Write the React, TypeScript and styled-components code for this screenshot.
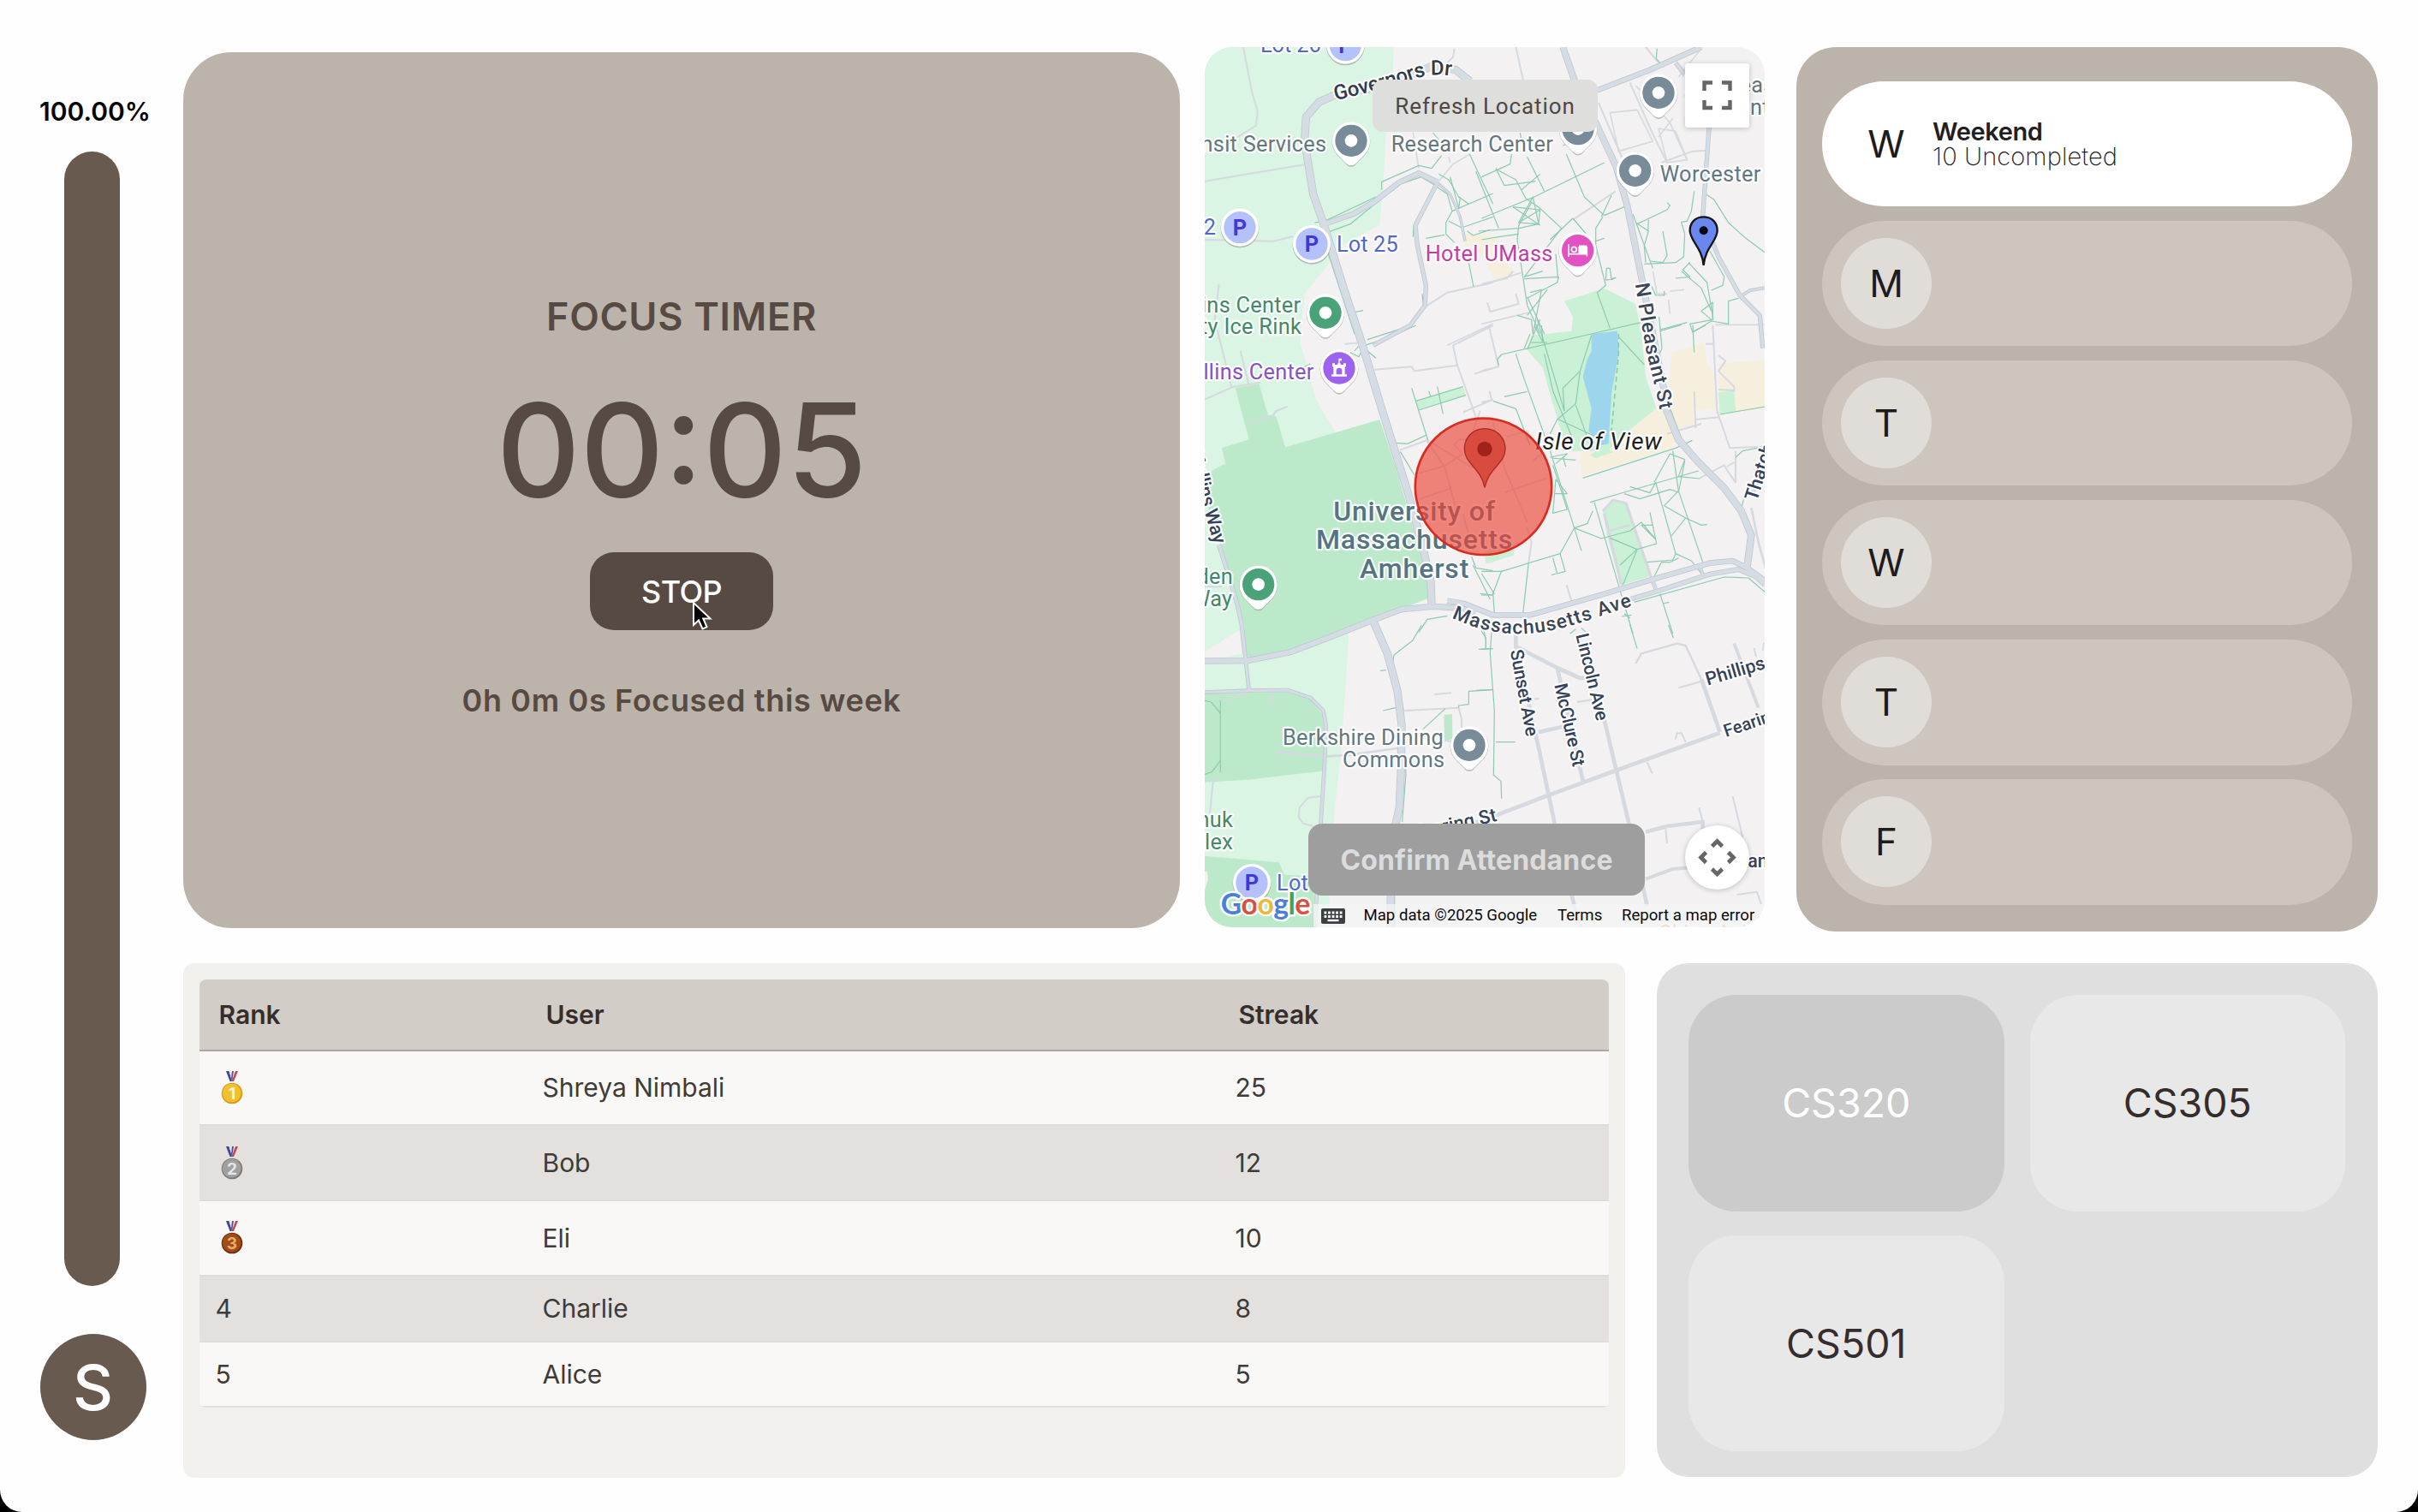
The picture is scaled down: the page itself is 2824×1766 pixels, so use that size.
import React from "react";
import styled, { createGlobalStyle } from "styled-components";

const GlobalStyle = createGlobalStyle`
  html, body { margin: 0; padding: 0; background: #000; }
  * { box-sizing: border-box; }
  body { font-family: Inter, "Liberation Sans", sans-serif; }
`;

/* ---------- page frame ---------- */

const Page = styled.div`
  display: flex;
  width: 2824px;
  height: 1766px;
  overflow: hidden;
  background: #fefefe;
  border-radius: 0 0 26px 26px;
`;

const Sidebar = styled.aside`
  display: flex;
  flex-direction: column;
  align-items: center;
  width: 214px;
  padding: 115px 0 0 2px;
`;

const Percent = styled.div`
  height: 30px;
  margin: 0 0 32px 6px;
  font-size: 30px;
  line-height: 30px;
  font-weight: 600;
  color: #060606;
`;

const ProgressBar = styled.div`
  width: 65px;
  height: 1325px;
  margin-right: 1px;
  border-radius: 33px;
  background: #685a4e;
`;

const Avatar = styled.div`
  display: flex;
  align-items: center;
  justify-content: center;
  width: 124px;
  height: 124px;
  margin: 56px 0 0 1px;
  border-radius: 50%;
  background: #685a4e;
  color: #fff;
  font-size: 73px;
  font-weight: 500;
  line-height: 1;
`;

const Main = styled.main`
  display: flex;
  flex-direction: column;
  gap: 37px;
  width: 2563px;
  padding-top: 55px;
`;

const Row = styled.div`
  display: flex;
  align-items: flex-start;
`;

/* ---------- focus timer ---------- */

const TimerCard = styled.section`
  display: flex;
  flex-direction: column;
  align-items: center;
  width: 1164px;
  height: 1023px;
  margin: 6px 28.5px 0 0;
  padding-top: 285.5px;
  border-radius: 56px;
  background: #bcb4ab;
  color: #564a43;
`;

const TimerTitle = styled.h2`
  margin: 0 0 58px;
  font-size: 45px;
  line-height: 45px;
  font-weight: 600;
  letter-spacing: 0.7px;
`;

const Clock = styled.div`
  margin-bottom: 43.5px;
  font-size: 152px;
  line-height: 152px;
  font-weight: 500;
  letter-spacing: -0.4px;
  font-feature-settings: "calt" 1, "case" 1;
`;

const StopButton = styled.button`
  width: 214px;
  height: 91px;
  margin-bottom: 64px;
  border: 0;
  border-radius: 28px;
  background: #564a43;
  color: #fff;
  font: 500 36px/1 Inter, sans-serif;
  letter-spacing: -0.6px;
  position: relative;
`;

const Cursor = styled.svg`
  position: absolute;
  left: 117px;
  top: 54px;
  overflow: visible;
`;

const WeekTotal = styled.div`
  font-size: 36px;
  line-height: 36px;
  font-weight: 600;
  letter-spacing: 0.65px;
`;

/* ---------- map ---------- */

const MapCard = styled.section`
  position: relative;
  width: 654.5px;
  height: 1028px;
  margin-right: 37px;
  border-radius: 32px;
  overflow: hidden;
  background: #f3f1f2;
  font-family: Roboto, sans-serif;
`;

const MapCanvas = styled.svg`
  display: block;
  width: 100%;
  height: 100%;
`;

const Area = styled.path<{ $c: string }>`
  fill: ${(p) => p.$c};
`;

const Line = styled.path<{ $c: string; $w: number }>`
  fill: none;
  stroke: ${(p) => p.$c};
  stroke-width: ${(p) => p.$w};
  stroke-linejoin: round;
`;

const Label = styled.text<{ $c: string; $s?: number; $b?: boolean; $i?: boolean }>`
  font-family: Roboto, sans-serif;
  font-size: ${(p) => p.$s ?? 76}px;
  font-weight: ${(p) => (p.$b ? 500 : 400)};
  font-style: ${(p) => (p.$i ? "italic" : "normal")};
  letter-spacing: ${(p) => (p.$b || p.$i ? 0 : 0.8)}px;
  fill: ${(p) => p.$c};
  stroke: #fff;
  stroke-opacity: 0.9;
  stroke-width: 13px;
  stroke-linejoin: round;
  paint-order: stroke;
`;

const RefreshButton = styled.button`
  position: absolute;
  left: 196.5px;
  top: 38px;
  width: 263px;
  height: 61px;
  border: 0;
  border-radius: 12px;
  background: #dededd;
  color: #4f4743;
  font: 400 26px/1 Roboto, sans-serif;
  letter-spacing: 0.9px;
`;

const ConfirmButton = styled.button`
  position: absolute;
  left: 121.5px;
  top: 907px;
  width: 393px;
  height: 84px;
  padding: 2px 0 0;
  border: 0;
  border-radius: 16px;
  background: #9e9e9e;
  color: #dcdcdc;
  font: 700 32px/1 Inter, sans-serif;
  letter-spacing: 0.15px;
`;

const MapControl = styled.button<{ $top: number; $round?: boolean }>`
  position: absolute;
  left: 561px;
  top: ${(p) => p.$top}px;
  width: 75px;
  height: 75px;
  padding: 0;
  border: 0;
  border-radius: ${(p) => (p.$round ? "50%" : "3px")};
  background: #fff;
  box-shadow: 0 1px 6px rgba(0, 0, 0, 0.22);
  svg { display: block; }
`;

const Attribution = styled.div`
  position: absolute;
  right: 0;
  bottom: 0;
  display: flex;
  align-items: center;
  width: 527px;
  height: 27px;
  padding-left: 9px;
  background: rgba(245, 245, 245, 0.78);
  color: #0a0a0a;
  font-size: 18.6px;
  line-height: 27px;
  white-space: nowrap;
`;

const Credit = styled.span<{ $w: number }>`
  width: ${(p) => p.$w}px;
`;

const Keyboard = styled.svg`
  width: 28px;
  height: 18px;
  margin-right: 21.5px;
`;

/* ---------- week ---------- */

const WeekCard = styled.section`
  display: flex;
  flex-direction: column;
  gap: 16.5px;
  width: 678.5px;
  height: 1032.5px;
  padding: 39.6px 29.5px 0;
  border-radius: 46px;
  background: #bcb4ab;
`;

const Day = styled.div<{ $active?: boolean }>`
  display: flex;
  align-items: center;
  height: 146.6px;
  padding-left: 22.5px;
  border-radius: 74px;
  background: ${(p) => (p.$active ? "#ffffff" : "#cec5bf")};
`;

const DayLetter = styled.div<{ $active?: boolean }>`
  display: flex;
  align-items: center;
  justify-content: center;
  width: 106px;
  height: 106px;
  border-radius: 50%;
  background: ${(p) => (p.$active ? "#ffffff" : "#e0ddd9")};
  color: #1d1b1b;
  font-size: 44px;
  line-height: 1;
`;

const DayText = styled.div`
  margin-left: 1px;
  color: #202022;
  font-size: 29px;
  line-height: 29px;
`;

const DayName = styled.div`
  font-weight: 600;
  letter-spacing: -0.4px;
`;

const DayCount = styled.div`
  font-weight: 200;
  letter-spacing: 0.1px;
`;

/* ---------- leaderboard ---------- */

const Board = styled.section`
  width: 1683.5px;
  height: 601.5px;
  margin-right: 37.5px;
  padding: 19px;
  border-radius: 13px;
  background: #f1f0ec;
`;

const Table = styled.table`
  width: 100%;
  table-layout: fixed;
  border-collapse: separate;
  border-spacing: 0;
  border-radius: 8px;
  overflow: hidden;
  color: #3f3b39;
  font-size: 30px;
  line-height: 36px;
`;

const HeadCell = styled.th<{ $w?: number }>`
  width: ${(p) => (p.$w ? `${p.$w}px` : "auto")};
  height: 84px;
  padding: 0 0 0 22.5px;
  border-bottom: 2px solid #aea6a0;
  background: #d3cdc8;
  color: #352e2c;
  text-align: left;
  font-weight: 600;
`;

const BodyRow = styled.tr<{ $alt: boolean; $h: number }>`
  height: ${(p) => p.$h}px;
  background: ${(p) => (p.$alt ? "#e4e0dd" : "#f9f8f6")};
`;

const Cell = styled.td`
  padding: 0 0 0 18.5px;
  border-bottom: 2px solid #dfdcd9;
`;

const MedalIcon = styled.svg`
  display: block;
  width: 26px;
  height: 39px;
  margin: 0 0 0 6px;
`;

/* ---------- classes ---------- */

const Classes = styled.section`
  display: grid;
  grid-template-columns: 368.5px 368.5px;
  grid-template-rows: 252.5px 252.5px;
  gap: 28px 30px;
  width: 841.5px;
  height: 600px;
  padding: 37.5px 37px;
  border-radius: 37px;
  background: #dfdfdf;
`;

const ClassTile = styled.div<{ $active?: boolean }>`
  display: flex;
  align-items: center;
  justify-content: center;
  border-radius: 56px;
  background: ${(p) => (p.$active ? "#cbcbcb" : "#e8e8e8")};
  color: ${(p) => (p.$active ? "#ffffff" : "#352d2d")};
  font-size: 46.5px;
  line-height: 1;
`;

/* ---------- map data: drawn in thirds of a pixel ---------- */

type Pts = string;
const d = (pts: Pts) => "M" + pts.split(" ").join("L");

const C = {
  light: "#daf5e3", mid: "#bde9cb", park: "#caf0d5", beige: "#f6efdd", water: "#9dd6ec",
  road: "#d5dce4", edge: "#bfc8d2", path: "#8ccbb0", minor: "#d6d9df",
};

interface Tile {
  x: number; y: number;
  areas?: [string, Pts][];
  roads?: [number, Pts][];
  minor?: [number, Pts][];
  paths?: Pts[];
}

const tiles: Tile[] = [
  {
    x: 0, y: 0,
    areas: [[C.light, "40,40 712,45 705,250 685,350 674,560 662,668 620,690 500,760 480,810 400,910 390,1000 385,1080 405,1150 440,1280 505,1390 500,1500 40,1620"]],
    roads: [
      [28, "980,165 930,125 850,110 700,175 500,215 450,238 405,290 400,370 412,450 430,560 465,660 540,900 590,1050 615,1130 660,1280 710,1440 760,1600 815,1800 842,1920 845,2000"],
      [20, "470,665 570,630 640,590 730,520 800,487 865,518"],
      [16, "865,520 788,670 795,740 825,880 822,950 770,1020 640,1090"],
      [10, "865,520 910,560 945,640 962,725"],
    ],
    minor: [[6, "185,45 215,200 235,270 230,320 165,360"], [6, "50,515 200,490 400,457"], [6, "50,720 290,725 360,708"], [6, "100,875 85,1000 100,1060 145,1240"], [6, "830,950 900,905 1060,870"], [5, "870,515 920,455 980,420"], [5, "780,345 800,470"], [6, "925,50 920,80 890,110"], [5, "1060,1015 900,1090"], [5, "905,430 910,450"]],
    paths: ["670,545 670,517 800,460 845,470 880,425", "730,527 808,500 850,525 900,560 917,620 895,660 895,700 925,730", "480,694 560,665 640,600 730,530", "870,490 905,510 940,570 975,595", "978,420 1060,595", "945,570 940,610 910,500", "917,620 1060,558", "905,655 950,678 1060,640", "825,715 890,703", "970,690 990,705 1050,685", "780,710 782,670 858,528", "975,800 992,885", "500,780 598,1050", "480,760 575,1050", "812,910 817,960 760,1025 620,1070", "570,975 605,968", "435,660 470,655 650,570", "400,360 412,450 450,620", "850,345 870,370"],
  },
  {
    x: 1020, y: 0,
    areas: [[C.beige, "-50,715 50,708 70,790 110,825 100,850 50,865 10,790"], [C.beige, "-60,700 20,700 20,760 -60,740"]],
    roads: [
      [24, "285,45 325,160 400,310 470,460 510,600 550,800 570,900 600,1050 650,1300"],
      [20, "370,210 590,125 770,45"],
      [16, "680,100 715,145 785,240 797,330 782,540 775,640 830,780 905,915 975,985 985,1100"],
      [12, "903,920 940,898 995,888"],
    ],
    minor: [[6, "120,45 148,170"], [6, "575,45 625,105"], [6, "410,240 500,450"], [6, "520,170 600,350 650,450"], [5, "450,275 545,265 600,375 480,410 450,275"], [5, "540,180 660,310 720,440"], [5, "620,330 680,340 720,440 650,450 620,330"], [5, "620,360 670,295"], [6, "630,450 740,410 785,408"], [6, "320,650 470,550"], [6, "0,880 140,835"], [6, "120,910 130,945 30,972 20,940"], [5, "0,1015 165,975"], [5, "600,830 615,910 650,910"], [5, "655,930 660,980"], [5, "660,900 710,895"], [5, "820,1018 990,1018"], [5, "770,50 690,150"], [6, "0,875 90,855 110,830"]],
    paths: ["0,500 100,455 105,420", "0,645 180,572 430,450", "-20,480 60,680", "50,470 80,530 190,515", "55,475 120,510 155,575 205,610 200,665 130,660", "110,605 205,670", "110,605 205,615 130,660 180,570 200,665", "140,545 205,490", "160,430 220,550", "135,345 140,370", "285,390 320,375", "297,420 360,570 430,635 500,605", "420,640 455,565", "-10,690 130,680 200,665", "0,720 60,710 130,700", "175,590 130,670 125,720 145,850 160,950 205,1050", "425,640 400,680 400,740 435,880 405,905 450,1030", "150,857 270,850 265,870 160,925", "205,610 280,680 150,850 215,830", "240,720 320,645 400,740", "260,770 268,860", "400,725 430,715", "530,630 600,820", "540,660 585,690 570,740", "545,665 650,615 660,600 650,590", "585,650 583,690", "635,690 650,775 635,800 590,795", "570,740 575,800", "745,550 735,620 720,655 700,658 712,700 708,780 680,800 570,805", "785,560 815,580 865,660 920,710 993,765", "725,800 790,870 812,1000", "700,830 770,890 805,970", "680,855 730,850 705,825 730,800", "800,760 850,850 845,880 805,897", "805,1000 770,970 810,940 810,1000 730,1015 740,1045 805,1005 865,1015 865,935 900,925", "625,1040 700,1018", "435,860 438,820 450,820 455,860 470,853 435,862", "590,870 610,915 640,915 640,900", "160,920 220,1050", "170,905 210,895 180,1050", "125,985 175,1000 180,1050", "615,50 612,85 625,100", "450,440 460,460", "230,895 160,985"],
  },
  {
    x: 0, y: 1020,
    areas: [
      [C.light, "40,480 130,480 200,1050 40,1150"],
      [C.mid, "157,220 240,205 272,315 300,318 333,430 125,492 110,430 205,400 190,345"],
      [C.mid, "50,525 110,490 330,428 663,330 720,500 790,740 835,890 838,955 760,985 600,1050 350,1135 200,1170 190,1050 150,920 110,790 50,600"],
      [C.park, "790,265 955,215 965,245 800,295"],
      [C.park, "1030,790 1140,775 1130,800 1035,835"],
    ],
    roads: [[16, "100,770 135,880 165,980 180,1050 190,1150"]],
    minor: [[6, "175,90 205,210"], [6, "50,260 150,215 245,200"], [7, "200,345 290,315 300,300 340,285"], [6, "645,155 775,145 785,160 935,140 920,70 1060,0"], [6, "935,140 1000,320"], [6, "735,437 830,402 990,500"], [6, "540,65 600,60"], [6, "995,170 1060,150"], [6, "955,305 1060,260"], [5, "1015,300 990,370 975,400 940,400 925,420 950,445"], [6, "825,400 890,495 930,640"], [6, "800,518 890,493 955,450"], [6, "800,610 910,572"], [6, "50,915 110,915"], [6, "1060,340 1100,500 1180,690"], [6, "1100,585 1250,535"], [6, "955,660 990,790"], [5, "1110,390 1180,370 1230,450 1200,475"]],
    paths: ["775,220 832,402", "790,265 955,215", "965,245 800,297", "865,215 885,310", "835,230 842,252", "720,412 760,415 825,385", "735,442 785,525", "575,90 587,75 610,70 690,45 790,0", "560,95 590,110 600,90", "620,90 650,115", "800,1075 830,1030 900,1018", "985,810 1000,850 1060,860", "1015,940 1060,945", "400,145 420,135", "1020,1075 1030,1050", "990,840 1050,960"],
  },
  {
    x: 1020, y: 1020,
    areas: [
      [C.beige, "600,290 640,300 690,390 665,430 350,530 345,450 440,430 520,360"],
      [C.beige, "665,95 780,60 790,130 820,180 820,300 745,290 740,350 690,360 650,290 660,180"],
      [C.beige, "830,135 993,120 993,290 830,310"],
      [C.park, "830,235 885,228 890,300 835,312"],
      [C.park, "160,85 175,35 315,20 320,-30 290,-85 430,-130 540,-75 560,30 575,180 612,290 520,365 440,440 300,440 245,260 215,150"],
      [C.water, "385,30 475,20 482,90 455,240 445,415 420,420 375,370 385,290 355,180 370,120 385,90"],
      [C.park, "380,455 400,440 430,420 460,445 400,465"],
      [C.park, "425,650 460,610 500,618 590,880 490,910 440,740"],
      [C.park, "20,815 110,790 115,805 20,835"],
    ],
    minor: [[10, "430,660 490,910"], [10, "505,620 600,900"], [8, "425,650 460,612 505,622"], [8, "440,722 520,700"], [6, "810,0 825,300 870,430 990,425"], [6, "750,330 830,322"], [6, "745,230 750,360"], [6, "785,65 815,65"], [6, "830,105 855,125 830,160 885,215 885,228 830,225"], [6, "0,160 60,145 25,0"], [6, "0,270 35,262 28,230"], [6, "650,380 770,345"], [6, "890,440 890,550 865,515 850,490 765,535"], [6, "885,480 860,495"], [6, "298,910 315,965"], [6, "160,710 175,760 165,830"], [14, "945,600 993,500"], [8, "945,640 970,760 995,850"]],
    roads: [
      [26, "645,290 690,400 760,480 850,570 910,650 945,735 930,850"],
      [20, "-120,965 -60,975 40,1015 170,1015 400,950 600,890 800,833 880,825 930,850 993,895"],
      [18, "520,960 620,930 800,872 900,855 960,880 993,910"],
      [14, "598,890 610,925"], [12, "765,840 775,875"],
    ],
    paths: ["60,140 55,120 70,102 385,30 600,-20", "120,100 150,190 240,440 350,790", "80,250 160,232", "195,-20 290,300", "220,100 250,230 320,400", "40,265 120,292 170,420", "385,35 345,160 285,220 290,300", "345,160 330,275 265,330 240,380", "330,280 368,385", "270,330 400,390", "480,40 570,138", "355,535 680,430 738,403", "380,620 500,585 760,510", "395,620 480,910 530,1080", "605,550 660,450 712,470 690,530 765,537", "670,440 690,580 640,632 715,675 770,700 790,698", "690,580 775,830", "610,550 680,800 670,822 580,830", "712,475 690,585 660,575 555,608 500,590", "520,565 590,587 610,550", "715,675 665,738", "630,830 605,880", "680,800 735,825 770,870", "690,815 660,830 630,830", "245,465 330,472", "240,462 300,450 260,485", "285,460 295,495", "250,490 300,645 250,658 260,540 300,590 255,590", "325,710 420,747 520,720 560,690 610,750 560,700 600,700", "590,655 613,765 545,785 450,745", "325,710 275,800 70,862 0,862", "325,710 370,695 390,650", "250,815 265,870 293,862 275,800", "245,875 262,870", "165,830 145,1010", "70,860 40,940 45,1010", "0,870 45,942", "0,945 40,945", "545,785 485,840", "545,785 495,910", "625,940 670,1080", "535,970 850,882 935,885 993,935", "490,1020 525,1015", "500,1010 520,1025", "635,975 657,970", "622,-30 632,80 620,110", "740,0 745,95", "740,22 785,0", "625,15 720,-10", "835,312 993,285", "890,462 915,440 993,425", "660,290 690,370 720,440 790,520 912,635 918,610", "160,85 205,-20", "175,60 230,60", "185,0 215,60 210,0", "150,80 170,30"],
  },
  {
    x: 0, y: 2070,
    areas: [
      [C.light, "40,130 555,20 545,200 525,470 505,650 480,1070 40,1070"],
      [C.mid, "190,0 190,120 350,90 500,40 600,0"],
      [C.mid, "40,240 340,235 420,262 468,320 472,450 462,512 200,542 40,552"],
      [C.mid, "40,808 310,832 330,875 435,880 430,1070 40,1070"],
      ["#f3f1f2", "40,860 58,865 62,890 50,930 40,930"],
      [C.mid, "888,315 917,312 918,400 890,405"],
    ],
    roads: [
      [22, "40,126 200,125 350,95 500,38 640,-18 740,-55 850,-65 940,-60 1000,-45"],
      [14, "180,0 205,230"],
      [14, "40,236 200,230 340,228 420,255 465,300 475,350 472,450 457,690 435,1070"],
      [28, "640,-15 690,100 725,230 740,350 738,500 732,640 705,760 700,1070"],
    ],
    minor: [[8, "300,445 480,460 560,455 725,432"], [6, "125,265 210,235"], [6, "285,230 287,280"], [6, "460,600 412,605 382,640 380,675 395,695 430,705"], [6, "108,535 80,540 68,660"], [6, "750,300 940,290 950,330 950,360"], [6, "855,243 915,238"], [6, "890,405 920,408"]],
    paths: ["50,265 72,270 90,290 105,310", "105,265 105,515", "50,523 75,515 105,475", "810,0 778,55 713,105 705,160 745,290 750,450 755,520 742,690", "665,160 685,158", "675,300 720,290", "893,293 815,365", "940,290 940,282 975,278 975,232 1060,227", "1022,25 1035,45 1035,85", "1018,85 1060,83", "715,900 715,1070"],
  },
  {
    x: 1020, y: 2070,
    minor: [
      [14, "120,30 120,75 200,430 255,690 325,985"], [14, "120,75 265,150 345,186 365,185"], [14, "265,150 355,545"], [14, "420,290 515,690 580,985"],
      [14, "-220,765 55,665 225,600 470,510 835,378"], [14, "575,725 650,705 775,690 775,715"], [12, "575,890 670,855 730,850"],
      [7, "540,135 560,100 685,65 715,72 770,190"], [14, "770,190 835,375"], [6, "690,220 770,198"], [12, "885,65 970,290"], [6, "955,80 962,112"], [5, "985,90 988,65 993,65"],
      [14, "200,375 285,356"], [7, "335,270 385,262"], [6, "185,260 202,257"], [6, "680,400 684,380 700,378 715,410"], [6, "580,480 598,520"], [6, "645,715 650,765"], [6, "762,640 775,690"], [6, "880,600 915,745"], [6, "895,945 965,935 980,980"], [12, "325,985 350,1060"],
    ],
    paths: ["35,25 30,100 45,300 42,525 68,548 70,608", "-20,229 40,226", "50,410 118,410", "520,0 545,82", "655,0 672,45", "-10,85 30,83", "310,30 330,15", "350,10 370,30", "8,20 15,50 15,80"],
  },
];

const Basemap = () => (
  <g>
    {tiles.map((t, i) => (
      <g key={i} transform={`translate(${t.x} ${t.y})`}>
        {t.areas?.map(([c, p], j) => <Area key={j} $c={c} d={d(p) + "Z"} />)}
      </g>
    ))}
    {tiles.map((t, i) => (
      <g key={i} transform={`translate(${t.x} ${t.y})`}>
        {t.minor?.map(([w, p], j) => <Line key={j} $c={C.minor} $w={w} d={d(p)} />)}
        {t.paths?.map((p, j) => <Line key={j} $c={C.path} $w={3.6} d={d(p)} />)}
      </g>
    ))}
    {tiles.map((t, i) => (
      <g key={i} transform={`translate(${t.x} ${t.y})`}>
        {t.roads?.map(([w, p], j) => <Line key={j} $c={C.edge} $w={w} d={d(p)} />)}
      </g>
    ))}
    {tiles.map((t, i) => (
      <g key={i} transform={`translate(${t.x} ${t.y})`}>
        {t.roads?.map(([w, p], j) => <Line key={j} $c={C.road} $w={w - 5} d={d(p)} />)}
      </g>
    ))}
    <path d="M1500,1050L1500,1120L1475,1390" fill="none" stroke={C.path} strokeWidth="5" strokeDasharray="18 12" />
  </g>
);

const Pin = ({ x, y, c, children }: { x: number; y: number; c: string; children?: React.ReactNode }) => (
  <g transform={`translate(${x} ${y})`}>
    <path d="M0,92C-10,92 -16,86 -22,78C-34,62 -67,44 -67,2A67,67 0 1 1 67,2C67,44 34,62 22,78C16,86 10,92 0,92Z" fill="#8a9096" opacity="0.55" />
    <path d="M0,87C-10,87 -16,82 -22,75C-34,60 -66,42 -66,0A66,66 0 1 1 66,0C66,42 34,60 22,75C16,82 10,87 0,87Z" fill="#fff" />
    <circle r="56" fill={c} />
    {children ?? <circle r="22" fill="#fff" />}
  </g>
);

const Parking = ({ x, y }: { x: number; y: number }) => (
  <g transform={`translate(${x} ${y})`}>
    <circle cy="4" r="67" fill="#8a9096" opacity="0.55" />
    <circle r="66" fill="#fff" />
    <circle r="56" fill="#b5c1fa" />
    <text y="27" textAnchor="middle" fontFamily="Roboto, sans-serif" fontWeight="700" fontSize="76" fill="#4338d6">P</text>
  </g>
);

const slate = "#64767f";
const green = "#44886a";
const indigo = "#5367c6";
const navy = "#33415a";

const PathLabel = ({ id, path, len, size = 64, c = navy, children }: { id: string; path: string; len?: number; size?: number; c?: string; children: string }) => (
  <>
    <path id={id} d={path} fill="none" />
    <Label $c={c} $s={size} $b>
      <textPath href={`#${id}`} textLength={len}>{children}</textPath>
    </Label>
  </>
);

const CampusMap = () => (
  <MapCanvas viewBox="50 45 1963.5 3084" preserveAspectRatio="none">
    <Basemap />

    <PathLabel id="gov" size={72} c="#2f3a4a" len={418} path="M508,232C620,205 700,185 790,155C830,142 870,138 930,148">Governors Dr</PathLabel>
    <PathLabel id="pls" size={70} c="#3b4557" len={450} path="M1558,875L1585,1040L1597,1110L1629,1240L1650,1340">N Pleasant St</PathLabel>
    <PathLabel id="mass" size={68} c="#3a4454" len={655} path="M915,2045C1000,2083 1080,2105 1180,2100C1300,2093 1400,2048 1570,1996">Massachusetts Ave</PathLabel>
    <PathLabel id="mull" size={66} len={345} path="M-5,1455L45,1660L92,1820">Mullins Way</PathLabel>
    <PathLabel id="that" size={66} path="M1984,1638L2070,1370">Thatcher Rd</PathLabel>
    <PathLabel id="sun" len={308} path="M1120,2160L1180,2480">Sunset Ave</PathLabel>
    <PathLabel id="mcc" len={296} path="M1275,2280L1345,2590">McClure St</PathLabel>
    <PathLabel id="lin" len={312} path="M1350,2105L1428,2430">Lincoln Ave</PathLabel>
    <PathLabel id="phi" size={65} path="M1812,2282L2100,2198">Phillips St</PathLabel>
    <PathLabel id="fea" size={61} path="M1876,2463L2150,2370">Fearing St</PathLabel>
    <PathLabel id="fea2" size={66} path="M784,2822L1084,2754">Fearing St</PathLabel>

    <Label $c={indigo} x="245" y="62" textLength="213">Lot 26</Label>
    <Label $c={slate} x="477" y="410" textAnchor="end">Transit Services</Label>
    <Label $c={slate} x="703" y="410" textLength="568">Research Center</Label>
    <Label $c={indigo} x="90" y="703" textAnchor="end">Lot 32</Label>
    <Label $c={indigo} x="512" y="763" textLength="216">Lot 25</Label>
    <Label $c="#bf3fa5" x="823" y="795" textLength="447">Hotel UMass</Label>
    <Label $c={green} x="387" y="975" textAnchor="end">Mullins Center</Label>
    <Label $c={green} x="389" y="1050" textAnchor="end">Community Ice Rink</Label>
    <Label $c={slate} x="1645" y="515" textLength="354">Worcester</Label>
    <Label $c={slate} x="1728" y="204">Northeast</Label>
    <Label $c={slate} x="1728" y="283">Residential</Label>
    <Label $c="#8652c6" x="433" y="1208" textAnchor="end">Mullins Center</Label>
    <Label $c={green} x="149" y="1926" textAnchor="end">Garden</Label>
    <Label $c={green} x="147" y="2004" textAnchor="end">Way</Label>
    <Label $c="#1d1f26" $s={84} $i x="1209" y="1454" textLength="442">Isle of View</Label>
    <Label $c="#567382" $s={96} $b x="501" y="1703" textLength="566">University of</Label>
    <Label $c="#567382" $s={96} $b x="440" y="1804" textLength="688">Massachusetts</Label>
    <Label $c="#567382" $s={96} $b x="593" y="1905" textLength="382">Amherst</Label>
    <Label $c={slate} x="323" y="2489" textLength="564">Berkshire Dining</Label>
    <Label $c={slate} x="533" y="2568" textLength="358">Commons</Label>
    <Label $c={green} x="149" y="2777" textAnchor="end">McGuirk Schnuk</Label>
    <Label $c={green} x="149" y="2857" textAnchor="end">Complex</Label>
    <Label $c={indigo} x="302" y="3001">Lot 22</Label>
    <Label $c={navy} $s={64} $b x="1953" y="2918">and St</Label>
    <Label $c="#e8866f" $s={72} x="1640" y="3170">China Asia</Label>

    <Parking x={543} y={38} />
    <Parking x={173} y={677} />
    <Parking x={425} y={735} />
    <Parking x={215} y={2973} />
    <Pin x={563} y={373} c="#788b99" />
    <Pin x={1640} y={205} c="#788b99" />
    <Pin x={1358} y={332} c="#788b99" />
    <Pin x={1558} y={478} c="#788b99" />
    <Pin x={977} y={2491} c="#788b99" />
    <Pin x={473} y={976} c="#4aa378" />
    <Pin x={238} y={1928} c="#4aa378" />
    <Pin x={1357} y={758} c="#e352c2">
      <path d="M-32,-22V22M-32,12H32M32,20V-14" stroke="#fff" strokeWidth="5" fill="none" />
      <path d="M2,-14H32V12H2Z" fill="#fff" />
      <circle cx="-13" cy="-4" r="9" fill="none" stroke="#fff" strokeWidth="5" />
      <path d="M4,-16H32" stroke="#fff" strokeWidth="5" />
    </Pin>
    <Pin x={521} y={1170} c="#9d63f0">
      <path d="M-2,-34H9V-26H2V-14H-2Z" fill="#fff" />
      <path fillRule="evenodd" fill="#fff" d="M-24,-17H-15V-12H-5V-17H5V-12H15V-17H24V-7L20,-3V22H27V29H-27V22H-20V-3L-24,-7ZM-10,22H10V9A10,10 0 0 0 -10,9Z" />
    </Pin>

    {/* home marker */}
    <path d="M1798,640C1767,640 1750,662 1750,688C1750,725 1792,745 1798,810C1804,745 1846,725 1846,688C1846,662 1829,640 1798,640Z" fill="#6a86ef" stroke="#15161c" strokeWidth="7" />
    <circle cx="1798" cy="688" r="15" fill="#08080c" />

    {/* attendance radius and classroom marker */}
    <circle cx="1026.5" cy="1585" r="239" fill="#ea4335" fillOpacity="0.64" stroke="#d92c21" strokeWidth="8" />
    <path d="M1031,1382C988,1382 960,1415 960,1453C960,1505 1018,1520 1031,1588C1044,1520 1103,1505 1103,1453C1103,1415 1074,1382 1031,1382Z" fill="#d94a3f" stroke="#a92c23" strokeWidth="4" />
    <circle cx="1031" cy="1453" r="26" fill="#9f231b" />

    <text x="106" y="3084" textLength="314" fontFamily="Lato, sans-serif" fontWeight="700" fontSize="102" stroke="#fff" strokeWidth="14" strokeLinejoin="round" style={{ paintOrder: "stroke" }}>
      <tspan fill="#4a7fdc">G</tspan><tspan fill="#d8503f">o</tspan><tspan fill="#eab83c">o</tspan><tspan fill="#4a7fdc">g</tspan><tspan fill="#45a05c">l</tspan><tspan fill="#d8503f">e</tspan>
    </text>
  </MapCanvas>
);

/* ---------- small drawings ---------- */

const medals = [
  { rim: "#d99a1c", face: "#f0c02e", text: "#fff6d0" },
  { rim: "#7c7c7c", face: "#a0a0a0", text: "#e6e6e6" },
  { rim: "#6f2f0c", face: "#a04d1a", text: "#f0ab66" },
];

const Medal = ({ place }: { place: number }) => {
  const m = medals[place - 1];
  return (
    <MedalIcon viewBox="0 0 26 39">
      <path d="M6,0H9.5L13,12H10.5Z" fill="#3d4a9c" />
      <path d="M9.5,0H11.5L14.5,11H13Z" fill="#e8e4ee" />
      <path d="M20,0H17L12.5,12H15Z" fill="#c0495a" />
      <path d="M15,0H13L12,9L13,12Z" fill="#5b4a8c" />
      <circle cx="13" cy="26" r="12.3" fill={m.rim} />
      <circle cx="12.6" cy="25.6" r="10.8" fill={m.face} />
      <text x="13" y="32.6" textAnchor="middle" fontFamily="Inter, sans-serif" fontWeight="700" fontSize="19" fill={m.text}>{place}</text>
    </MedalIcon>
  );
};

const ranks = [
  { user: "Shreya Nimbali", streak: 25, h: 87.5 },
  { user: "Bob", streak: 12, h: 88 },
  { user: "Eli", streak: 10, h: 87.5 },
  { user: "Charlie", streak: 8, h: 77 },
  { user: "Alice", streak: 5, h: 76 },
];

const days = ["W", "M", "T", "W", "T", "F"];

export default function App() {
  return (
    <>
      <GlobalStyle />
      <Page>
        <Sidebar>
          <Percent>100.00%</Percent>
          <ProgressBar />
          <Avatar>S</Avatar>
        </Sidebar>
        <Main>
          <Row>
            <TimerCard>
              <TimerTitle>FOCUS TIMER</TimerTitle>
              <Clock>00:05</Clock>
              <StopButton>
                STOP
                <Cursor width="28" height="38" viewBox="0 0 28 38">
                  <path d="M4,5V31L10,25.5L14.5,35.5L19.5,33.3L15.3,23.5H23.5Z" fill="#050505" stroke="#fff" strokeWidth="2" />
                </Cursor>
              </StopButton>
              <WeekTotal>0h 0m 0s Focused this week</WeekTotal>
            </TimerCard>

            <MapCard>
              <CampusMap />
              <RefreshButton>Refresh Location</RefreshButton>
              <MapControl $top={19}>
                <svg width="75" height="75" viewBox="0 0 75 75">
                  <path d="M22.5,32V22.5H32M43,22.5H52.5V32M52.5,43V52H43M32,52H22.5V43" fill="none" stroke="#666" strokeWidth="4.4" />
                </svg>
              </MapControl>
              <MapControl $top={909} $round>
                <svg width="75" height="75" viewBox="0 0 75 75">
                  <path d="M31.5,24.5L37.5,18.5L43.5,24.5M31.5,51L37.5,57L43.5,51M24.5,31.5L18.5,37.5L24.5,43.5M50.5,31.5L56.5,37.5L50.5,43.5" fill="none" stroke="#666" strokeWidth="4.6" />
                </svg>
              </MapControl>
              <ConfirmButton>Confirm Attendance</ConfirmButton>
              <Attribution>
                <Keyboard viewBox="0 0 28 18">
                  <rect width="28" height="18" rx="2" fill="#3c3f44" />
                  <path d="M3.5,5H24.5M3.5,9.5H24.5" stroke="#fff" strokeWidth="2.8" strokeDasharray="2.8 1.75" />
                  <path d="M7.5,14H20.5" stroke="#fff" strokeWidth="2.4" />
                </Keyboard>
                <Credit $w={226.5}>Map data ©2025 Google</Credit>
                <Credit $w={75}>Terms</Credit>
                <Credit $w={160}>Report a map error</Credit>
              </Attribution>
            </MapCard>

            <WeekCard>
              {days.map((letter, i) => (
                <Day key={i} $active={i === 0}>
                  <DayLetter $active={i === 0}>{letter}</DayLetter>
                  {i === 0 && (
                    <DayText>
                      <DayName>Weekend</DayName>
                      <DayCount>10 Uncompleted</DayCount>
                    </DayText>
                  )}
                </Day>
              ))}
            </WeekCard>
          </Row>

          <Row>
            <Board>
              <Table>
                <thead>
                  <tr>
                    <HeadCell $w={382}>Rank</HeadCell>
                    <HeadCell $w={809}>User</HeadCell>
                    <HeadCell>Streak</HeadCell>
                  </tr>
                </thead>
                <tbody>
                  {ranks.map((r, i) => (
                    <BodyRow key={r.user} $alt={i % 2 === 1} $h={r.h}>
                      <Cell>{i < 3 ? <Medal place={i + 1} /> : i + 1}</Cell>
                      <Cell>{r.user}</Cell>
                      <Cell>{r.streak}</Cell>
                    </BodyRow>
                  ))}
                </tbody>
              </Table>
            </Board>

            <Classes>
              <ClassTile $active>CS320</ClassTile>
              <ClassTile>CS305</ClassTile>
              <ClassTile>CS501</ClassTile>
            </Classes>
          </Row>
        </Main>
      </Page>
    </>
  );
}
